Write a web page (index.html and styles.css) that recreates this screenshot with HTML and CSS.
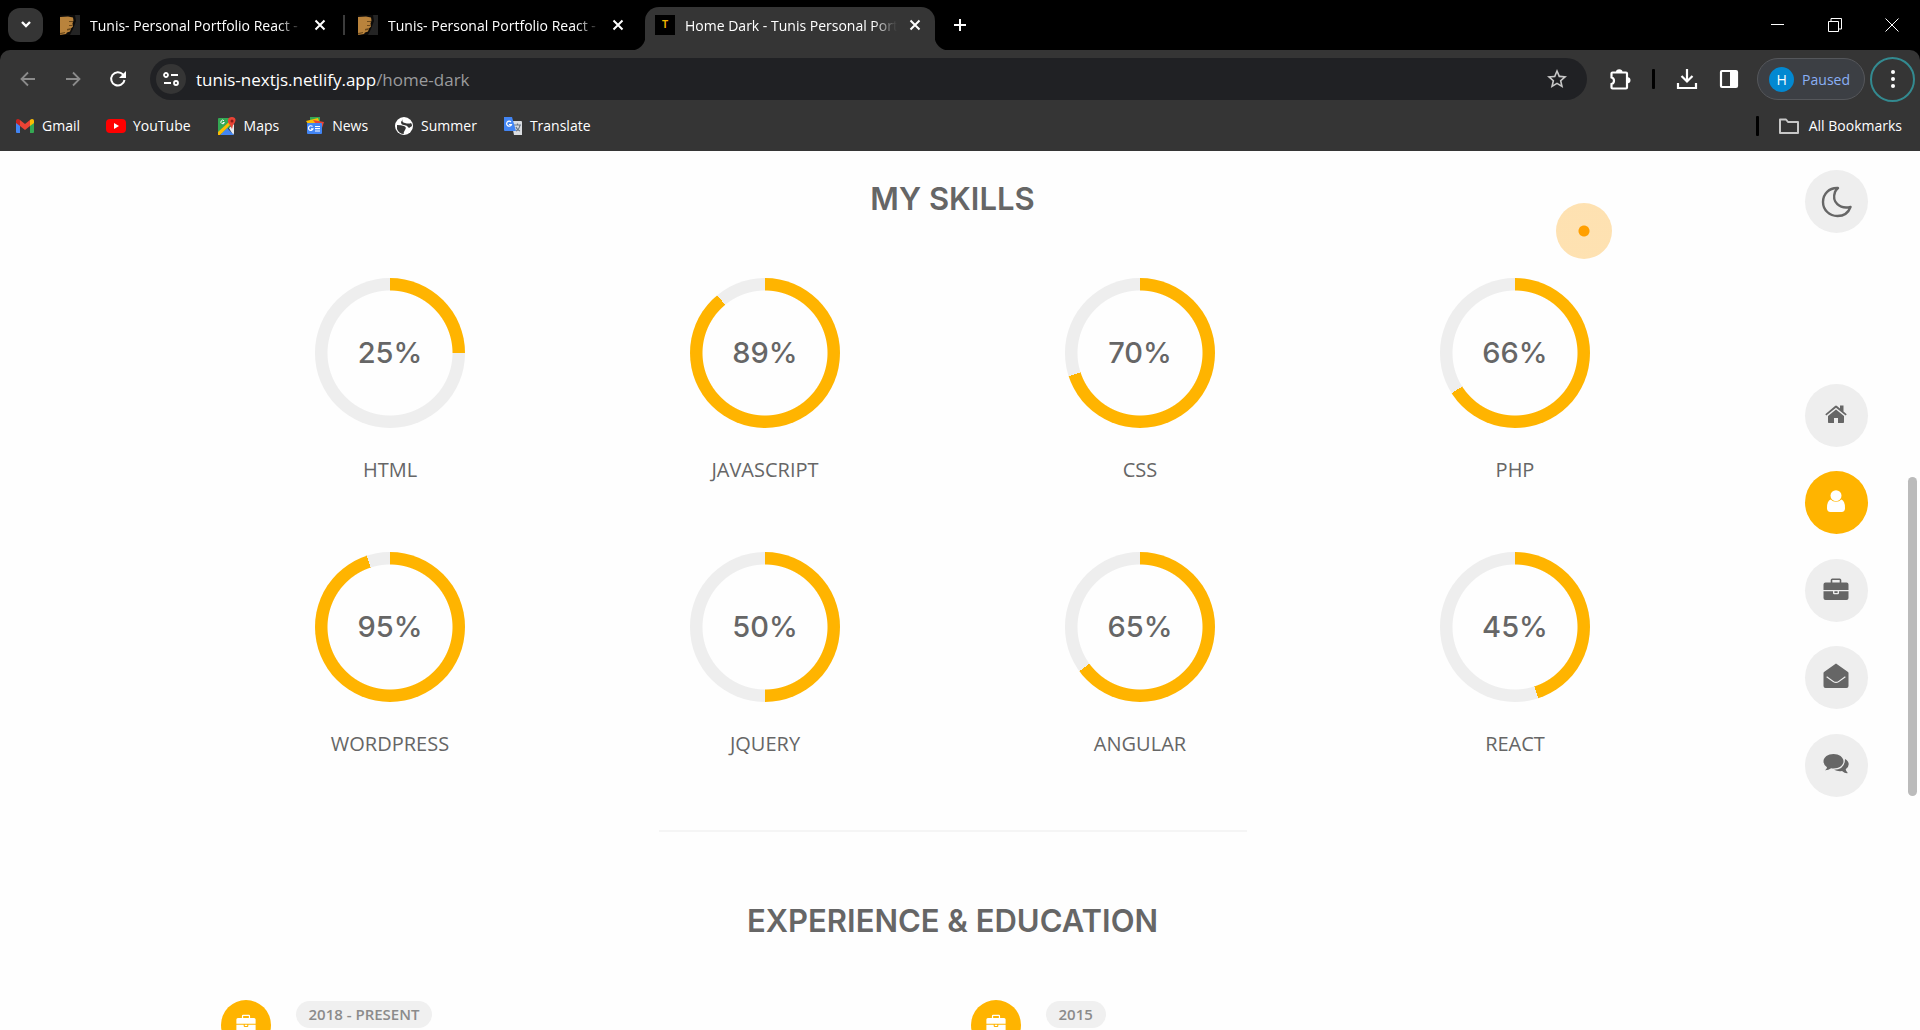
FILE: index.html
```html
<!DOCTYPE html>
<html lang="en">
<head>
<meta charset="utf-8">
<title>Home Dark - Tunis Personal Portfolio</title>
<link rel="stylesheet" href="styles.css">
</head>
<body>
<svg class="sprite" aria-hidden="true">
  <symbol id="i-close" viewBox="0 0 12 12"><path d="M1.500 1.500l9 9M10.500 1.500l-9 9" fill="none" stroke="currentColor" stroke-width="2"/></symbol>
  <symbol id="i-portrait" viewBox="0 0 20 20"><path fill="#242424" d="M0 0h20v20H0z"/><path fill="#0c0b0a" d="M0 0h15l1 6-3 8-3 6H0z"/><path fill="#b9833c" d="M0 2l8-.5 5 1 .500 3-1 3 .500 3-2 2-1 3-3 1-1 1.500-6 1z"/><path fill="#6d4a1c" d="M9 6h4v1H9zM9 10h4l-1 1H9zM7 14l4-1-1 2-3 .500zM0 18l5-1v1l-5 1.500z"/></symbol>
  <symbol id="i-case" viewBox="0 0 26 22"><path fill="none" stroke="currentColor" stroke-width="1.600" d="M8.500 5V2q0-.800.800-.800h7.400q.800 0 .800.800v3"/><path fill="currentColor" d="M2.500 4.500h21q2 0 2 2V12H.5V6.500q0-2 2-2zM.5 13.200H10V15q0 1.200 1.200 1.200h3.600Q16 16.200 16 15v-1.800h9.500V20q0 2-2 2h-21q-2 0-2-2zM11.400 13.200h3.200V15h-3.200z"/></symbol>
</svg>

<header class="chrome">
  <div class="tabstrip">
    <button class="tab-search" aria-label="Search tabs"><svg width="14" height="10" viewBox="0 0 14 10"><path d="M3 2l4 4 4-4" fill="none" stroke="#fff" stroke-width="2.400"/></svg></button>
    <div class="tabs">
      <div class="tab"><svg class="favicon"><use href="#i-portrait"/></svg><span class="tab-title">Tunis- Personal Portfolio React - Nextjs</span><button class="tab-close" aria-label="Close tab"><svg><use href="#i-close"/></svg></button></div>
      <div class="tab divided"><svg class="favicon"><use href="#i-portrait"/></svg><span class="tab-title">Tunis- Personal Portfolio React - Nextjs</span><button class="tab-close" aria-label="Close tab"><svg><use href="#i-close"/></svg></button></div>
      <div class="tab active"><span class="favicon letter">T</span><span class="tab-title">Home Dark - Tunis Personal Portfolio</span><button class="tab-close" aria-label="Close tab"><svg><use href="#i-close"/></svg></button></div>
    </div>
    <button class="new-tab" aria-label="New tab"><svg width="14" height="14" viewBox="0 0 14 14"><path d="M7 1v12M1 7h12" stroke="#fff" stroke-width="2"/></svg></button>
    <div class="window-controls">
      <button aria-label="Minimize"><svg width="14" height="14" viewBox="0 0 14 14"><path d="M0 6.500h13" stroke="#fff"/></svg></button>
      <button aria-label="Restore"><svg width="14" height="14" viewBox="0 0 14 14"><path d="M.5 3.500h10v10H.5zM3 3V.5h10.500V11H11" fill="none" stroke="#fff"/></svg></button>
      <button aria-label="Close"><svg width="14" height="14" viewBox="0 0 14 14"><path d="M.5.5l13 13M13.500.5l-13 13" stroke="#fff"/></svg></button>
    </div>
  </div>

  <div class="toolbar">
    <div class="nav-buttons">
      <button class="dim" aria-label="Back"><svg width="16" height="16" viewBox="0 0 16 16"><path d="M15 8H2M8 1.500L1.500 8 8 14.500" fill="none" stroke="currentColor" stroke-width="1.800"/></svg></button>
      <button class="dim" aria-label="Forward"><svg width="16" height="16" viewBox="0 0 16 16"><path d="M1 8h13M8 1.500L14.500 8 8 14.500" fill="none" stroke="currentColor" stroke-width="1.800"/></svg></button>
      <button aria-label="Reload"><svg width="18" height="18" viewBox="0 0 18 18"><path d="M15.500 10a6.700 6.700 0 1 1-1.600-5.600L16 6.500" fill="none" stroke="#fff" stroke-width="2"/><path d="M17 1v7h-7z" fill="#fff"/></svg></button>
    </div>
    <div class="omnibox">
      <button class="site-info" aria-label="Site information"><svg width="16" height="14" viewBox="0 0 16 14"><g fill="none" stroke="#fff" stroke-width="1.800"><circle cx="3" cy="3" r="2"/><path d="M8 3h7M1 11h7"/><circle cx="13" cy="11" r="2"/></g></svg></button>
      <a class="url" href="#">tunis-nextjs.netlify.app<span>/home-dark</span></a>
      <button class="star" aria-label="Bookmark this tab"><svg width="24" height="24" viewBox="0 0 24 24"><path fill="#c7c7c7" d="M22 9.240l-7.190-.62L12 2 9.190 8.630 2 9.240l5.460 4.730L5.820 21 12 17.270 18.180 21l-1.630-7.030zM12 15.400l-3.760 2.270 1-4.280-3.320-2.880 4.380-.38L12 6.100l1.710 4.040 4.380.38-3.320 2.880 1 4.280z"/></svg></button>
    </div>
    <div class="actions">
      <button aria-label="Extensions"><svg width="22" height="22" viewBox="0 0 22 22"><path d="M2.500 5.500q0-1 1-1H17q1 0 1 1v14q0 1-1 1H3.500q-1 0-1-1V16q2.500-.8 2.500-3.300T2.500 9.500z" fill="none" stroke="#fff" stroke-width="2.200"/><path fill="#fff" d="M7 4q0-2.800 3.200-2.800T13.500 4zM18.500 9q3 .5 3 3.300t-3 3.200z"/></svg></button>
      <span class="bar"></span>
      <button aria-label="Downloads"><svg width="22" height="22" viewBox="0 0 22 22"><path d="M11 1v12M5.500 8l5.500 5.500L16.500 8M2 15v5h18v-5" fill="none" stroke="#fff" stroke-width="2.200"/></svg></button>
      <button aria-label="Side panel"><svg width="20" height="20" viewBox="0 0 20 20"><rect x="2" y="2" width="16" height="16" rx="1" fill="none" stroke="#fff" stroke-width="2.200"/><path fill="#fff" d="M11 2h7v16h-7z"/></svg></button>
    </div>
    <button class="profile"><span class="avatar">H</span>Paused</button>
    <button class="menu" aria-label="Menu"><svg width="6" height="20" viewBox="0 0 6 20"><g fill="#fff"><circle cx="3" cy="3" r="2"/><circle cx="3" cy="10" r="2"/><circle cx="3" cy="17" r="2"/></g></svg></button>
  </div>

  <nav class="bookmarks" aria-label="Bookmarks">
    <a href="#"><svg width="20" height="20" viewBox="0 0 20 20"><path fill="#4285f4" d="M1 5v11q0 1 1 1h3V8z"/><path fill="#34a853" d="M15 8v9h3q1 0 1-1V5z"/><path fill="#fbbc04" d="M15 4v6l4-3V5c0-2-2-3-4-1z"/><path fill="#c5221f" d="M1 5v2l4 3V4C3 2 1 3 1 5z"/><path fill="#ea4335" d="M5 4l5 4 5-4v6l-5 4-5-4z"/></svg>Gmail</a>
    <a href="#"><svg width="20" height="20" viewBox="0 0 20 20"><rect y="3" width="20" height="14" rx="4" fill="#f00"/><path fill="#fff" d="M8 7l5 3-5 3z"/></svg>YouTube</a>
    <a href="#"><svg width="20" height="20" viewBox="0 0 20 20"><path fill="#34a853" d="M1 3q0-1 1-1h12v8L6 17l-5 1z"/><path fill="#e8eaed" d="M12 12l5-4v9q0 1-1 2z"/><path fill="#4285f4" d="M3 19l7-7 7 7z"/><path fill="#fbbc04" d="M1 16L13 5l2 2L3 19H1z"/><path fill="#ea4335" d="M15 1c-5 0-5 5-2 8l2 4 1-4c4-4 3-8-1-8z"/><circle cx="15" cy="5" r="1.500" fill="#8c1d18"/><path d="M7 4.700a1.800 1.800 0 1 0 .4 1.900H5.800" fill="none" stroke="#fff"/></svg>Maps</a>
    <a href="#"><svg width="20" height="20" viewBox="0 0 20 20"><path fill="#34a853" d="M5 1h10v7H5z"/><path fill="#fbbc04" d="M1 5l12-3 2 6H3z"/><path fill="#ea4335" d="M8 4l11 2-3 9z"/><rect x="2" y="7" width="15" height="11" rx="1" fill="#4285f4"/><path d="M7.500 10.500a2.300 2.300 0 1 0 .5 2.300H6M10 10.500h5M10 12.700h5M10 15h5" fill="none" stroke="#fff" stroke-width="1.200"/></svg>News</a>
    <a href="#"><svg width="20" height="20" viewBox="0 0 20 20"><circle cx="10" cy="10" r="9" fill="#fff"/><path fill="#353535" d="M3 9q4 0 7 1t1 4-1 4q-5 0-7-5zM9 3q-2 3 2 4t6 0q1 1 1 3l-3 2q-2-3-5-3t-3-3z"/></svg>Summer</a>
    <a href="#"><svg width="20" height="20" viewBox="0 0 20 20"><path fill="#dadce0" d="M8 5h10q1 0 1 1v13h-8z"/><path d="M11 9h7M14.500 7.500V9M17 9q-1 5-4 6M13 11q1 3 4 4" fill="none" stroke="#6b7785" stroke-width="1.200"/><path fill="#4285f4" d="M1 1h8l4 14H2q-1 0-1-1z"/><path d="M8 6a2.500 2.500 0 1 0 .5 2.500H6" fill="none" stroke="#fff" stroke-width="1.200"/></svg>Translate</a>
    <a class="all" href="#"><span class="bar"></span><svg width="22" height="20" viewBox="0 0 22 20"><path d="M2 3.500h6l2 2.500h10v11H2z" fill="none" stroke="#c7c7c7" stroke-width="2" stroke-linejoin="round"/></svg>All Bookmarks</a>
  </nav>
</header>

<div class="viewport">
  <main class="page">
    <section class="container">
      <h2>MY SKILLS</h2>
      <ul class="skills">
        <li><div class="ring" style="--value:25%"><span>25%</span></div><h3>HTML</h3></li>
        <li><div class="ring" style="--value:89%"><span>89%</span></div><h3>JAVASCRIPT</h3></li>
        <li><div class="ring" style="--value:70%"><span>70%</span></div><h3>CSS</h3></li>
        <li><div class="ring" style="--value:66%"><span>66%</span></div><h3>PHP</h3></li>
        <li><div class="ring" style="--value:95%"><span>95%</span></div><h3>WORDPRESS</h3></li>
        <li><div class="ring" style="--value:50%"><span>50%</span></div><h3>JQUERY</h3></li>
        <li><div class="ring" style="--value:65%"><span>65%</span></div><h3>ANGULAR</h3></li>
        <li><div class="ring" style="--value:45%"><span>45%</span></div><h3>REACT</h3></li>
      </ul>
      <hr>
      <h2>EXPERIENCE &amp; EDUCATION</h2>
      <div class="timeline">
        <article><span class="node"><svg width="20" height="18"><use href="#i-case"/></svg></span><span class="date">2018 - PRESENT</span></article>
        <article><span class="node"><svg width="20" height="18"><use href="#i-case"/></svg></span><span class="date">2015</span></article>
      </div>
    </section>
    <button class="round theme" aria-label="Switch theme"><svg width="32" height="32" viewBox="0 0 32 32"><path d="M17 2C8 1.500 2 8 2 16s6.500 14 14.500 14c6 0 11-3.500 13-9-11 2.500-19-5-15.500-15q.8-2.200 3-4z" fill="none" stroke="currentColor" stroke-width="2.400" stroke-linejoin="round"/></svg></button>
    <nav class="side" aria-label="Sections">
      <a class="round" href="#" aria-label="Home"><svg width="22" height="18" viewBox="0 0 22 18"><path fill="currentColor" d="M11 4.500l8 6.500v6.200q0 .8-.8.800H13v-5H9v5H3.800q-.8 0-.8-.8V11z"/><path fill="currentColor" d="M.3 9.200L10 1q1-.8 2 0l3 2.500V.5h3.500V6.500l3.200 2.700-1 1.300L11 2.800 1.300 10.500z"/></svg></a>
      <a class="round current" href="#" aria-label="About"><svg width="20" height="22" viewBox="0 0 20 22"><path fill="currentColor" d="M4.700 9.500q2 2.300 5.300 2.300t5.300-2.300Q19 10.500 19 18q0 4-3.500 4h-11Q1 22 1 18q0-7.500 3.700-8.500z"/><circle cx="10" cy="5.700" r="5.500" fill="currentColor"/></svg></a>
      <a class="round" href="#" aria-label="Portfolio"><svg width="26" height="22"><use href="#i-case"/></svg></a>
      <a class="round" href="#" aria-label="Contact"><svg width="26" height="26" viewBox="0 0 26 26"><path fill="currentColor" fill-rule="evenodd" d="M13 .5l12 8.500q.5.500.5 1.300V23q0 2-2 2h-21q-2 0-2-2V10.300Q.5 9.500 1 9zM4 13.300l-.7 1L10 19q3 2 6 0l6.700-4.700-.7-1L15.500 18q-2.500 1.700-5 0z"/></svg></a>
      <a class="round" href="#" aria-label="Blog"><svg width="26" height="20" viewBox="0 0 26 20"><path fill="currentColor" d="M10.500 0C16 0 20.500 3.200 20.500 7.300S16 14.500 10.500 14.500q-1.200 0-2.300-.2Q5 16.500 2 16.300q1.800-1.200 2-3Q.5 11 .5 7.300C.5 3.200 5 0 10.500 0z"/><path fill="currentColor" d="M22 5q3.700 2 3.700 5.300 0 3-3 5 .2 2 1.800 3.200v.7q-2.500.3-5.500-2.200-4 .8-8-1.200Q22 15.500 22 5z"/></svg></a>
    </nav>
    <span class="cursor" aria-hidden="true"></span>
  </main>
  <div class="scrollbar" aria-hidden="true"><span class="thumb"></span></div>
</div>
</body>
</html>
```

FILE: styles.css
```css
* { box-sizing: border-box; }

body {
  margin: 0;
  height: 100vh;
  display: flex;
  flex-direction: column;
  overflow: hidden;
  background: #fefefe;
  color: #666;
  font-family: "Open Sans", sans-serif;
}

button { margin: 0; padding: 0; border: 0; background: none; color: inherit; font: inherit; }
button, a { display: flex; align-items: center; justify-content: center; }
a { color: inherit; text-decoration: none; }
svg { display: block; flex: none; }
.sprite { position: absolute; width: 0; height: 0; }

/* Browser chrome */
.chrome { background: #000; color: #fff; font-size: 14px; }

.tabstrip { display: flex; align-items: center; height: 50px; padding-left: 8px; }
.tab-search { width: 35px; height: 34px; margin-right: 7px; border-radius: 12px; background: #353535; }
.tabs { display: flex; align-self: flex-end; }
.tab {
  position: relative;
  display: flex;
  align-items: center;
  gap: 10px;
  width: 298px;
  height: 43px;
  padding: 0 22px 7px 10px;
}
.tab.divided::before { content: ""; position: absolute; left: -5px; top: 8px; width: 2px; height: 20px; background: #3c3c3c; }
.favicon { flex: none; width: 20px; height: 20px; }
.letter { background: #000; color: #f0b400; font: 700 10px/20px "Liberation Sans", sans-serif; text-align: center; }
.tab-title {
  flex: 1;
  overflow: hidden;
  white-space: nowrap;
  mask-image: linear-gradient(to right, #000 88%, transparent 99%);
}
.tab-close svg { width: 12px; height: 12px; }
.tab.active { width: 290px; padding-right: 14px; margin-left: -1px; border-radius: 14px 14px 0 0; background: #353535; }
.tab.active::before, .tab.active::after { content: ""; position: absolute; bottom: 0; width: 14px; height: 14px; }
.tab.active::before { left: -14px; background: radial-gradient(circle at 0 0, #000 14px, #353535 15px); }
.tab.active::after { right: -14px; background: radial-gradient(circle at 100% 0, #000 14px, #353535 15px); }
.new-tab { width: 50px; height: 34px; }
.window-controls { display: flex; margin-left: auto; }
.window-controls button { width: 57px; height: 48px; }

.toolbar {
  display: flex;
  align-items: center;
  height: 58px;
  padding: 0 5px;
  border-radius: 10px 10px 0 0;
  background: #353535;
}
.nav-buttons { display: flex; }
.nav-buttons button { width: 45px; height: 40px; }
.dim { color: #8b8b8b; }
.omnibox {
  flex: 1;
  display: flex;
  align-items: center;
  height: 42px;
  margin-left: 10px;
  padding: 0 18px 0 6px;
  border-radius: 21px;
  background: #202124;
}
.site-info { width: 30px; height: 30px; border-radius: 50%; background: #353535; }
.url { margin: 0 auto 0 10px; font-size: 17px; }
.url span { color: #9a9b9d; }
.actions { display: flex; align-items: center; margin-left: 12px; }
.actions button { width: 42px; height: 40px; }
.bar { width: 3px; height: 20px; border-radius: 1px; background: #000; }
.actions .bar { margin: 0 11px; }
.profile {
  gap: 8px;
  height: 42px;
  margin-left: 7px;
  padding: 0 14px 0 11px;
  border: 1px solid #55575b;
  border-radius: 21px;
  background: #3c3f44;
  color: #8ab0f5;
}
.avatar { width: 25px; height: 25px; border-radius: 50%; background: #0288d1; color: #fff; line-height: 25px; }
.menu { width: 45px; height: 45px; margin-left: 5px; border: 2px solid #338a90; border-radius: 50%; }

.bookmarks { display: flex; align-items: center; gap: 26px; height: 43px; padding: 0 18px 8px 15px; background: #353535; }
.bookmarks a { gap: 7px; }
.bookmarks .all { margin-left: auto; gap: 9px; }
.all .bar { margin-right: 10px; }

/* Page */
.viewport { flex: 1; min-height: 0; display: flex; overflow: hidden; }
.page { flex: 1; position: relative; }
.container { max-width: 1500px; margin: 0 auto; }
h2 {
  margin: 0;
  padding-top: 24px;
  color: #666;
  font: 600 31px/48px Inter, sans-serif;
  text-align: center;
}
.skills {
  display: grid;
  grid-template-columns: repeat(4, 1fr);
  row-gap: 66px;
  margin: 55px 0 0;
  padding: 0;
  list-style: none;
}
.skills li { display: flex; flex-direction: column; align-items: center; gap: 26px; }
.ring {
  display: grid;
  place-items: center;
  width: 150px;
  height: 150px;
  border-radius: 50%;
  background:
    radial-gradient(circle, #fefefe 62px, transparent 63px),
    conic-gradient(#ffb400 var(--value), #eee 0);
  font: 500 29px/48px Inter, sans-serif;
}
h3 { margin: 0; font-size: 20px; font-weight: 400; line-height: 32px; }
hr { width: 588px; height: 2px; margin: 70px auto 0; border: 0; background: #f5f5f5; }
hr + h2 { padding-top: 65px; }
.timeline { display: grid; grid-template-columns: 1fr 1fr; margin: 55px 0 0; }
.timeline article { display: flex; align-items: flex-start; gap: 25px; padding-left: 18px; }
.node {
  display: grid;
  place-items: center;
  width: 50px;
  height: 50px;
  padding-bottom: 4px;
  border-radius: 50%;
  background: #ffb400;
  color: #fff;
}
.date {
  margin-top: 1px;
  padding: 0 13px;
  border-radius: 14px;
  background: #f0f0f0;
  color: #8b8b8b;
  font-size: 15px;
  font-weight: 600;
  line-height: 27px;
}

/* Controls floating over the page */
.round { width: 63px; height: 63px; border-radius: 50%; background: #eee; color: #666; }
.theme { position: absolute; top: 19px; right: 37px; }
.side {
  position: absolute;
  top: 50%;
  right: 37px;
  display: flex;
  flex-direction: column;
  justify-content: space-between;
  height: 413px;
  margin-top: -207px;
}
.current { background: #ffb400; color: #fff; }
.side svg { margin: 0 1px 3px 0; }
.cursor {
  position: absolute;
  top: 52px;
  left: 1556px;
  width: 56px;
  height: 56px;
  border-radius: 50%;
  background: radial-gradient(circle, #ff9f00 5px, rgba(255, 159, 0, .3) 6px);
}
.scrollbar { width: 15px; padding-left: 3px; }
.thumb { display: block; width: 9px; height: 319px; margin-top: 326px; border-radius: 5px; background: #bbb; }
```
